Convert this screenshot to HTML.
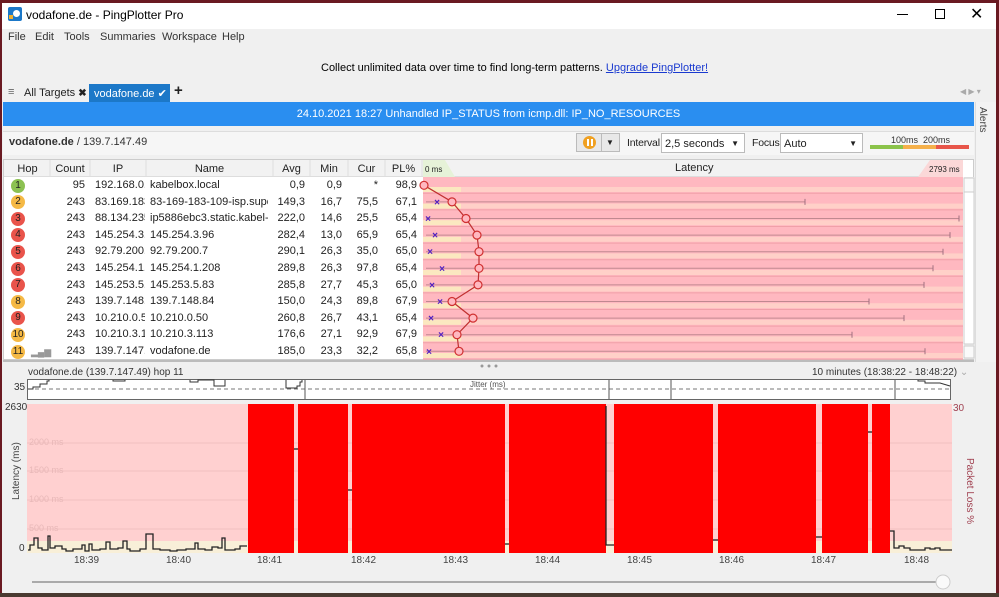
<!DOCTYPE html>
<html><head><meta charset="utf-8"><style>
*{margin:0;padding:0;box-sizing:border-box}
body{width:999px;height:597px;overflow:hidden;background:#f0f0f0;font-family:"Liberation Sans",sans-serif;font-size:11px;color:#222;position:relative}
.a{position:absolute;white-space:nowrap}
.r{text-align:right}
.c{text-align:center}
</style></head><body>
<div class="a" style="left:0;top:0;width:999px;height:3px;background:#6a1a22"></div>
<div class="a" style="left:996px;top:0;width:3px;height:597px;background:#6a1a22"></div>
<div class="a" style="left:0;top:0;width:2px;height:597px;background:#6a1a22"></div>
<div class="a" style="left:0;top:593px;width:999px;height:4px;background:#4a3a30"></div>
<div class="a" style="left:2px;top:3px;width:994px;height:26px;background:#fff"></div>
<div class="a" style="left:8px;top:7px;width:14px;height:14px;background:#1c78c8;border-radius:2px"><div style="position:absolute;left:5px;top:3px;width:7px;height:7px;background:#fff;border-radius:50%"></div><div style="position:absolute;left:1px;top:8px;width:4px;height:4px;background:#f0b030"></div></div>
<div class="a" style="left:26px;top:8px;font-size:12px;color:#000">vodafone.de - PingPlotter Pro</div>
<div class="a" style="left:897px;top:14px;width:11px;height:1px;background:#000"></div>
<div class="a" style="left:935px;top:9px;width:10px;height:10px;border:1px solid #000"></div>
<div class="a" style="left:970px;top:4px;font-size:16px;color:#000">✕</div>
<div class="a" style="left:8px;top:31px;color:#333">File</div>
<div class="a" style="left:35px;top:31px;color:#333">Edit</div>
<div class="a" style="left:64px;top:31px;color:#333">Tools</div>
<div class="a" style="left:100px;top:31px;color:#333">Summaries</div>
<div class="a" style="left:162px;top:31px;color:#333">Workspace</div>
<div class="a" style="left:222px;top:31px;color:#333">Help</div>
<div class="a" style="left:321px;top:62px;font-size:11px;color:#000">Collect unlimited data over time to find long-term patterns. <span style="color:#1a3ad0;text-decoration:underline">Upgrade PingPlotter!</span></div>
<div class="a" style="left:8px;top:86px;font-size:11px;color:#666">≡</div>
<div class="a" style="left:24px;top:87px;font-size:11px;color:#222">All Targets <b style="font-size:10px">✖</b></div>
<div class="a" style="left:89px;top:84px;width:81px;height:18px;background:#1c78c8;color:#fff;font-size:11px;padding:3px 0 0 5px">vodafone.de ✔</div>
<div class="a" style="left:174px;top:82px;font-size:15px;font-weight:bold">+</div>
<div class="a" style="left:960px;top:87px;font-size:8px;color:#aaa">◀ ▶ ▾</div>
<div class="a" style="left:3px;top:102px;width:971px;height:24px;background:#2a8ef0;color:#fff;font-size:11px;text-align:center;padding-top:6px">24.10.2021 18:27 Unhandled IP_STATUS from icmp.dll: IP_NO_RESOURCES</div>
<div class="a" style="left:975px;top:102px;width:21px;height:260px;background:#f3f3f3;border-left:1px solid #ddd"></div>
<div class="a" style="left:977px;top:107px;font-size:10px;color:#444;writing-mode:vertical-rl">Alerts</div>
<div class="a" style="left:3px;top:131px;width:971px;height:24px;background:#f6f6f6;border-top:1px solid #ddd"></div>
<div class="a" style="left:9px;top:136px;font-size:11px;color:#333"><b>vodafone.de</b> / 139.7.147.49</div>
<div class="a" style="left:576px;top:133px;width:44px;height:19px;border:1px solid #bbb;background:#e8e8e8"></div>
<div class="a" style="left:583px;top:136px;width:13px;height:13px;border-radius:50%;background:#f0a020"></div>
<div class="a" style="left:587px;top:139px;width:2px;height:7px;background:#fff"></div><div class="a" style="left:591px;top:139px;width:2px;height:7px;background:#fff"></div>
<div class="a" style="left:601px;top:134px;width:1px;height:17px;background:#bbb"></div>
<div class="a" style="left:606px;top:138px;font-size:8px">▼</div>
<div class="a" style="left:627px;top:137px;font-size:10.5px;letter-spacing:-0.2px">Interval</div>
<div class="a" style="left:661px;top:133px;width:84px;height:20px;background:#fff;border:1px solid #bbb;padding:4px 0 0 3px;font-size:11px">2,5 seconds<span style="position:absolute;right:5px;top:5px;font-size:8px">▼</span></div>
<div class="a" style="left:752px;top:137px;font-size:10.5px;letter-spacing:-0.2px">Focus</div>
<div class="a" style="left:780px;top:133px;width:83px;height:20px;background:#fff;border:1px solid #bbb;padding:4px 0 0 3px;font-size:11px">Auto<span style="position:absolute;right:5px;top:5px;font-size:8px">▼</span></div>
<div class="a" style="left:891px;top:135px;font-size:9px;color:#333">100ms&nbsp;&nbsp;200ms</div>
<div class="a" style="left:870px;top:145px;width:33px;height:4px;background:#8bc34a"></div>
<div class="a" style="left:903px;top:145px;width:33px;height:4px;background:#f5b04a"></div>
<div class="a" style="left:936px;top:145px;width:33px;height:4px;background:#e8564a"></div>

<div class="a" style="left:3px;top:159px;width:971px;height:201px;background:#fff;border:1px solid #ccc"></div>
<div class="a" style="left:4px;top:160px;width:959px;height:17px;background:#f2f2f2;border-bottom:1px solid #ddd"></div>

<svg class="a" style="left:0;top:0" width="999" height="597">
 <g stroke="#ddd"><line x1="50" y1="160" x2="50" y2="177"/><line x1="90" y1="160" x2="90" y2="177"/><line x1="146" y1="160" x2="146" y2="177"/><line x1="273" y1="160" x2="273" y2="177"/><line x1="310" y1="160" x2="310" y2="177"/><line x1="348" y1="160" x2="348" y2="177"/><line x1="385" y1="160" x2="385" y2="177"/><line x1="422" y1="160" x2="422" y2="177"/></g>
 <polygon points="423,160 445,160 455,177 423,177" fill="#e6f2d8"/>
 <polygon points="930,160 963,160 963,177 918,177" fill="#fbd8d8"/>
 <rect x="423" y="177" width="540" height="182" fill="#ffb8c0"/>
 <g id="rows"></g>
 <rect x="964" y="177" width="10" height="182" fill="#f0f0f0"/>
 <rect x="964" y="178" width="10" height="15" fill="#fafafa" stroke="#ccc"/>
 <rect x="964" y="192" width="10" height="152" fill="#fff" stroke="#ccc"/>
 <rect x="964" y="346" width="10" height="12" fill="#fafafa" stroke="#ccc"/>
 <circle cx="482" cy="366" r="1.5" fill="#999"/><circle cx="489" cy="366" r="1.5" fill="#999"/><circle cx="496" cy="366" r="1.5" fill="#999"/>
 <line x1="3" y1="361" x2="974" y2="361" stroke="#888"/>

 <rect x="27.5" y="379.5" width="923" height="20" fill="#fff" stroke="#666"/>
 <line x1="28" y1="389" x2="950" y2="389" stroke="#777" stroke-dasharray="4,3"/>
 <g stroke="#555"><line x1="305" y1="380" x2="305" y2="399"/><line x1="609" y1="380" x2="609" y2="399"/><line x1="671" y1="380" x2="671" y2="399"/><line x1="895" y1="380" x2="895" y2="399"/></g>
 <g fill="none" stroke="#333">
 <polyline points="28,389 33,389 33,387 40,387 40,384 47,384 47,381 49,381 49,380"/>
 <polyline points="113,380 113,381 125,381 125,380"/>
 <polyline points="190,380 190,382 198,382 198,380 214,380 214,386 225,386 225,380"/>
 <polyline points="286,380 286,388 297,388 297,386 300,386 300,382 302,382 302,380"/>
 <polyline points="918,380 918,381 925,381 925,383 940,383 950,386"/>
 </g>

 <rect x="27" y="404" width="925" height="149" fill="#ffd0d0"/>
 <rect x="27" y="541" width="925" height="12" fill="#f8efd8"/>
 <g stroke="#f0c0c0"><line x1="27" y1="443" x2="952" y2="443"/><line x1="27" y1="471" x2="952" y2="471"/><line x1="27" y1="500" x2="952" y2="500"/><line x1="27" y1="529" x2="952" y2="529"/></g>
 <g fill="#ff0000">
  <rect x="248" y="404" width="46" height="149"/><rect x="298" y="404" width="50" height="149"/>
  <rect x="352" y="404" width="153" height="149"/><rect x="509" y="404" width="97" height="149"/>
  <rect x="614" y="404" width="99" height="149"/><rect x="718" y="404" width="98" height="149"/>
  <rect x="822" y="404" width="46" height="149"/><rect x="872" y="404" width="18" height="149"/>
 </g>
 <g stroke="#222" stroke-width="1.3" fill="none">
  <polyline points="28,550 30,550 30,545 34,545 34,538 38,538 38,548 42,548 42,550 48,550 48,536 50,536 50,548 55,548 55,546 62,546 62,549 66,549 66,551 73,551 73,549 82,549 82,545 85,545 85,551 89,551 89,544 92,544 92,550 100,550 100,549 106,549 106,542 110,542 110,549 118,549 118,548 123,548 123,541 127,541 127,549 130,549 130,551 140,551 140,549 146,549 146,534 153,534 153,549 160,549 160,550 170,550 170,551 177,551 177,550 186,550 186,549 195,549 195,543 198,543 198,549 205,549 205,550 212,550 212,547 218,547 218,548 222,548 222,538 225,538 225,550 235,550 235,549 240,549 240,546 247,546"/>
  <polyline points="294,449 298,449"/><polyline points="348,490 352,490"/><polyline points="505,544 509,544"/>
  <polyline points="606,406 606,545 614,545"/><polyline points="713,540 718,540"/><polyline points="816,537 822,537"/>
  <polyline points="868,432 872,432"/>
  <polyline points="890,531 894,531 894,548 899,548 899,546 904,546 904,548 910,548 910,550 925,550 925,548 930,548 930,549 935,549 935,548 940,548 940,550 952,550"/>
 </g>
 <line x1="32" y1="582" x2="938" y2="582" stroke="#aaa" stroke-width="2"/>
 <circle cx="943" cy="582" r="7" fill="#fafafa" stroke="#ccc"/>
</svg>

<div class="a c" style="left:5px;top:163px;width:45px">Hop</div>
<div class="a c" style="left:50px;top:163px;width:40px">Count</div>
<div class="a c" style="left:90px;top:163px;width:56px">IP</div>
<div class="a c" style="left:146px;top:163px;width:127px">Name</div>
<div class="a c" style="left:273px;top:163px;width:37px">Avg</div>
<div class="a c" style="left:310px;top:163px;width:38px">Min</div>
<div class="a c" style="left:348px;top:163px;width:37px">Cur</div>
<div class="a c" style="left:385px;top:163px;width:37px">PL%</div>
<div class="a" style="left:425px;top:165px;font-size:8px">0 ms</div>
<div class="a" style="left:675px;top:162px">Latency</div>
<div class="a" style="left:929px;top:165px;font-size:8px">2793 ms</div>

<div id="tbl"></div>

<div class="a" style="left:28px;top:367px;font-size:10px;color:#333">vodafone.de (139.7.147.49) hop 11</div>
<div class="a" style="left:812px;top:367px;font-size:10px;color:#333">10 minutes (18:38:22 - 18:48:22) <span style="color:#aaa">⌄</span></div>
<div class="a" style="left:14px;top:382px;font-size:10px;color:#333">35</div>
<div class="a" style="left:470px;top:380px;font-size:8px;color:#555">Jitter (ms)</div>
<div class="a" style="left:5px;top:402px;font-size:10px;color:#333">2630</div>
<div class="a" style="left:19px;top:543px;font-size:10px;color:#333">0</div>
<div class="a" style="left:11px;top:500px;font-size:10px;color:#444;transform:rotate(-90deg);transform-origin:0 0">Latency (ms)</div>
<div class="a" style="left:29px;top:437px;font-size:9px;color:#e8b8b8">2000 ms</div>
<div class="a" style="left:29px;top:465px;font-size:9px;color:#e8b8b8">1500 ms</div>
<div class="a" style="left:29px;top:494px;font-size:9px;color:#e8b8b8">1000 ms</div>
<div class="a" style="left:29px;top:523px;font-size:9px;color:#e8b8b8">500 ms</div>
<div class="a" style="left:953px;top:403px;font-size:10px;color:#a04050">30</div>
<div class="a" style="left:964px;top:458px;font-size:10px;color:#a04050;writing-mode:vertical-rl">Packet Loss %</div>
<div class="a" style="left:74px;top:555px;font-size:10px;color:#444">18:39</div>
<div class="a" style="left:166px;top:555px;font-size:10px;color:#444">18:40</div>
<div class="a" style="left:257px;top:555px;font-size:10px;color:#444">18:41</div>
<div class="a" style="left:351px;top:555px;font-size:10px;color:#444">18:42</div>
<div class="a" style="left:443px;top:555px;font-size:10px;color:#444">18:43</div>
<div class="a" style="left:535px;top:555px;font-size:10px;color:#444">18:44</div>
<div class="a" style="left:627px;top:555px;font-size:10px;color:#444">18:45</div>
<div class="a" style="left:719px;top:555px;font-size:10px;color:#444">18:46</div>
<div class="a" style="left:811px;top:555px;font-size:10px;color:#444">18:47</div>
<div class="a" style="left:904px;top:555px;font-size:10px;color:#444">18:48</div>

<script>
var d=[
["1","95","192.168.0.","kabelbox.local","0,9","0,9","*","98,9","#8cc152"],
["2","243","83.169.183","83-169-183-109-isp.superk","149,3","16,7","75,5","67,1","#f5b945"],
["3","243","88.134.235","ip5886ebc3.static.kabel-de","222,0","14,6","25,5","65,4","#e9544b"],
["4","243","145.254.3.9","145.254.3.96","282,4","13,0","65,9","65,4","#e9544b"],
["5","243","92.79.200.7","92.79.200.7","290,1","26,3","35,0","65,0","#e9544b"],
["6","243","145.254.1.2","145.254.1.208","289,8","26,3","97,8","65,4","#e9544b"],
["7","243","145.253.5.8","145.253.5.83","285,8","27,7","45,3","65,0","#e9544b"],
["8","243","139.7.148.8","139.7.148.84","150,0","24,3","89,8","67,9","#f5b945"],
["9","243","10.210.0.50","10.210.0.50","260,8","26,7","43,1","65,4","#e9544b"],
["10","243","10.210.3.11","10.210.3.113","176,6","27,1","92,9","67,9","#f5b945"],
["11","243","139.7.147.4","vodafone.de","185,0","23,3","32,2","65,8","#f5b945"]];
var cx=[424,452,466,477,479,479,478,452,473,457,459];
var xm=[0,437,428,435,430,442,432,440,431,441,429];
var le=[0,805,959,950,943,933,924,869,904,852,925];
var h="",s="",pts=[];
for(var i=0;i<11;i++){var r=d[i],y=177+i*16.6,cy=y+8.3;
h+='<div class="a c" style="left:11px;top:'+(y+1.5)+'px;width:14px;height:14px;border-radius:50%;background:'+r[8]+';font-size:10px;line-height:14px;color:#222">'+r[0]+'</div>';
if(i==10)h+='<div class="a" style="left:31px;top:'+(y+4)+'px;font-size:9px;color:#999">▂▄▆</div>';
h+='<div class="a r" style="left:50px;top:'+(y+2)+'px;width:35px">'+r[1]+'</div>';
h+='<div class="a" style="left:95px;top:'+(y+2)+'px;width:50px;overflow:hidden">'+r[2]+'</div>';
h+='<div class="a" style="left:150px;top:'+(y+2)+'px;width:118px;overflow:hidden">'+r[3]+'</div>';
h+='<div class="a r" style="left:273px;top:'+(y+2)+'px;width:32px">'+r[4]+'</div>';
h+='<div class="a r" style="left:310px;top:'+(y+2)+'px;width:32px">'+r[5]+'</div>';
h+='<div class="a r" style="left:348px;top:'+(y+2)+'px;width:30px">'+r[6]+'</div>';
h+='<div class="a r" style="left:385px;top:'+(y+2)+'px;width:32px">'+r[7]+'</div>';
s+='<rect x="423" y="'+(y+10)+'" width="540" height="5" fill="#ffd0c8"/><rect x="423" y="'+(y+10)+'" width="38" height="5" fill="#fbe8c0"/><line x1="423" y1="'+(y+16.3)+'" x2="963" y2="'+(y+16.3)+'" stroke="#f0a0a8"/>';
if(i>0){s+='<line x1="426" y1="'+cy+'" x2="'+le[i]+'" y2="'+cy+'" stroke="#c08890"/><line x1="'+le[i]+'" y1="'+(cy-3)+'" x2="'+le[i]+'" y2="'+(cy+3)+'" stroke="#a07080"/>';
s+='<text x="'+xm[i]+'" y="'+(cy+3.5)+'" font-size="10" font-weight="bold" fill="#5020c0" text-anchor="middle" font-family="Liberation Sans">×</text>';}
pts.push(cx[i]+','+cy);}
s+='<polyline points="'+pts.join(' ')+'" fill="none" stroke="#c03030" stroke-width="1.2"/>';
for(var i=0;i<11;i++)s+='<circle cx="'+cx[i]+'" cy="'+(177+i*16.6+8.3)+'" r="4" fill="#ffb8c0" stroke="#d03030" stroke-width="1.2"/>';
document.getElementById('tbl').innerHTML=h;
document.getElementById('rows').innerHTML=s;
</script>
</body></html>
